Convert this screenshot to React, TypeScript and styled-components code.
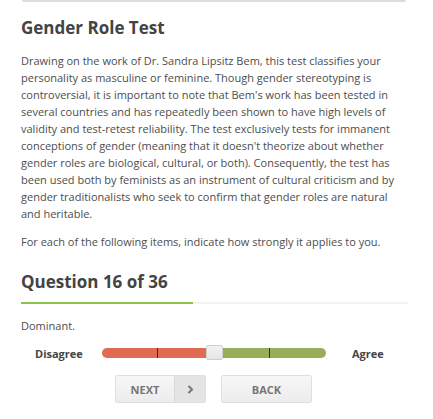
import styled, { createGlobalStyle } from "styled-components";

const GlobalStyle = createGlobalStyle`
  html, body {
    margin: 0;
    padding: 0;
    background: #fff;
  }
  body {
    font-family: "Open Sans", "Liberation Sans", sans-serif;
    color: #4a4a4a;
  }
`;

const Page = styled.div`
  width: 433px;
  height: 419px;
  overflow: hidden;
  box-sizing: border-box;
  padding: 0 25px 0 21px;
`;

const CardEdge = styled.div`
  height: 2px;
  margin: 0 2px 0 1px;
  background: #dcdcdc;
  border-radius: 0 0 3px 3px;
`;

const Heading = styled.h1`
  margin: 16px 0 0;
  font-size: 17px;
  line-height: 20px;
  font-weight: 700;
  color: #444;
`;

const Intro = styled.p`
  margin: 14px 0 0;
  font-size: 11px;
  line-height: 17px;
  color: #4d4d4d;
`;

const Note = styled(Intro)`
  margin-top: 11px;
`;

const QuestionTitle = styled.h2`
  margin: 22px 0 0;
  font-size: 17px;
  line-height: 20px;
  font-weight: 700;
  color: #444;
`;

const Progress = styled.div`
  margin-top: 10px;
  height: 2px;
  background: #f3f3f3;
`;

const ProgressFill = styled.div`
  height: 100%;
  background: #8bc34a;
`;

const Statement = styled.div`
  margin-top: 14px;
  font-size: 11px;
  line-height: 16px;
  color: #4d4d4d;
`;

const ScaleRow = styled.div`
  display: flex;
  align-items: center;
  margin-top: 10px;
  height: 18px;
  padding-left: 14px;
`;

const ScaleLabel = styled.span<{ $width: number }>`
  width: ${(p) => p.$width}px;
  font-size: 11px;
  font-weight: 700;
  color: #444;
`;

const Track = styled.div`
  position: relative;
  display: flex;
  width: 224px;
  height: 10px;
  margin: 0 26px 0 19px;
`;

const Segment = styled.div<{ $color: string; $side: "left" | "right" }>`
  flex: 1;
  background: ${(p) => p.$color};
  border-radius: ${(p) => (p.$side === "left" ? "5px 0 0 5px" : "0 5px 5px 0")};
`;

const Tick = styled.div`
  position: absolute;
  top: 0;
  width: 1px;
  height: 10px;
  background: #3a2a22;
`;

const Handle = styled.div`
  position: absolute;
  top: -3px;
  left: 104px;
  width: 15px;
  height: 13px;
  border: 1px solid #cfcfcf;
  border-radius: 2px;
  background: linear-gradient(#f2f2f2, #e6e6e6);
`;

const Buttons = styled.div`
  display: flex;
  gap: 15px;
  margin-top: 13px;
  padding-left: 94px;
`;

const Button = styled.button`
  display: flex;
  align-items: stretch;
  width: 91px;
  height: 28px;
  padding: 0;
  border: 1px solid #e0e0e0;
  border-radius: 2px;
  background: linear-gradient(#f7f7f7, #ececec);
  font-family: "Open Sans", "Liberation Sans", sans-serif;
  font-size: 11px;
  font-weight: 700;
  color: #777;
  cursor: pointer;
`;

const ButtonText = styled.span`
  flex: 1;
  display: flex;
  align-items: center;
  justify-content: center;
`;

const ArrowPart = styled.span`
  width: 30px;
  display: flex;
  align-items: center;
  justify-content: center;
  background: #e4e4e4;
  border-left: 1px solid #dadada;
`;

export default function App() {
  return (
    <>
      <GlobalStyle />
      <Page>
        <CardEdge />
        <Heading>Gender Role Test</Heading>
        <Intro>
          Drawing on the work of Dr. Sandra Lipsitz Bem, this test classifies
          your personality as masculine or feminine. Though gender
          stereotyping is controversial, it is important to note that Bem's
          work has been tested in several countries and has repeatedly been
          shown to have high levels of validity and test-retest reliability.
          The test exclusively tests for immanent conceptions of gender
          (meaning that it doesn't theorize about whether gender roles are
          biological, cultural, or both). Consequently, the test has been used
          both by feminists as an instrument of cultural criticism and by
          gender traditionalists who seek to confirm that gender roles are
          natural and heritable.
        </Intro>
        <Note>
          For each of the following items, indicate how strongly it applies to
          you.
        </Note>
        <QuestionTitle>Question 16 of 36</QuestionTitle>
        <Progress>
          <ProgressFill style={{ width: `${(16 / 36) * 100}%` }} />
        </Progress>
        <Statement>Dominant.</Statement>
        <ScaleRow>
          <ScaleLabel $width={48}>Disagree</ScaleLabel>
          <Track>
            <Segment $color="#e06a52" $side="left" />
            <Segment $color="#9aad5b" $side="right" />
            <Tick style={{ left: 55 }} />
            <Tick style={{ left: 167 }} />
            <Handle />
          </Track>
          <ScaleLabel $width={40}>Agree</ScaleLabel>
        </ScaleRow>
        <Buttons>
          <Button>
            <ButtonText>NEXT</ButtonText>
            <ArrowPart>
              <svg width="7" height="9" viewBox="0 0 7 9">
                <path
                  d="M1.5 1 L5 4.5 L1.5 8"
                  fill="none"
                  stroke="#777"
                  strokeWidth="2"
                />
              </svg>
            </ArrowPart>
          </Button>
          <Button>
            <ButtonText>BACK</ButtonText>
          </Button>
        </Buttons>
      </Page>
    </>
  );
}
